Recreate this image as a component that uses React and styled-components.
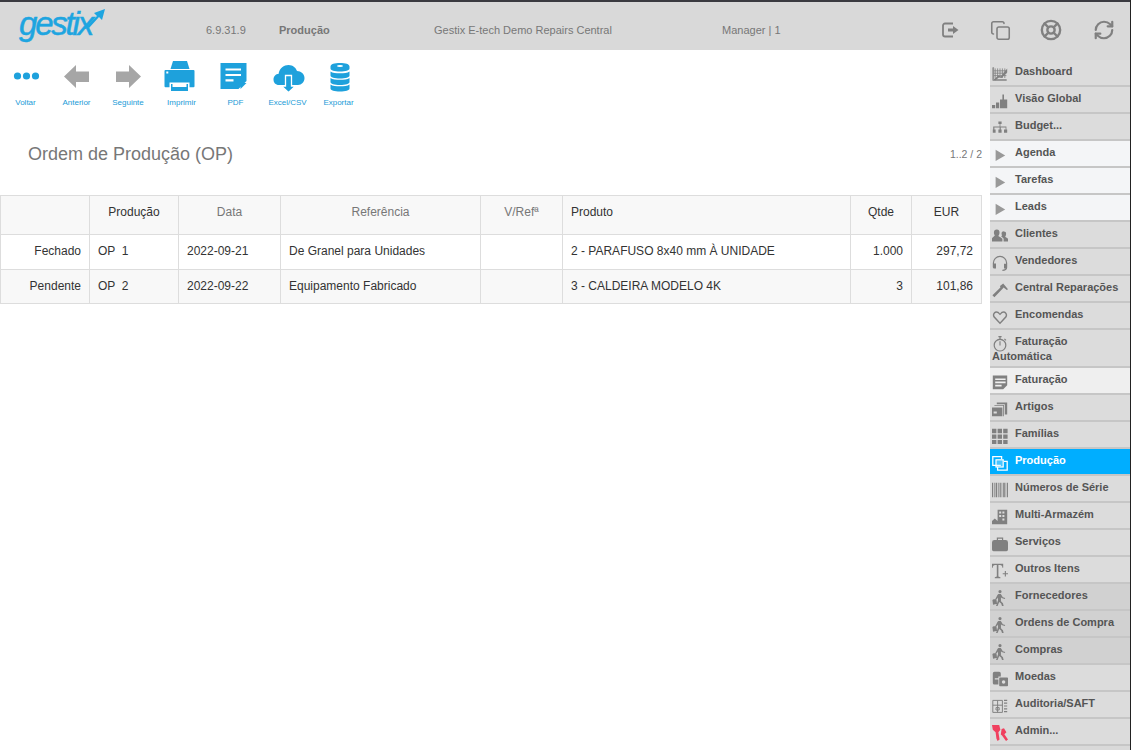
import React from 'react';
import styled, { createGlobalStyle } from 'styled-components';
import { Copy, LifeBuoy, RefreshCw } from 'lucide-react';

const Global = createGlobalStyle`
  html, body { margin: 0; padding: 0; background: #fff; }
  body { font-family: "Liberation Sans", Arial, sans-serif; }
`;

const Page = styled.div`
  width: 1131px;
  height: 750px;
  box-sizing: border-box;
  border-right: 1px solid #222;
  overflow: hidden;
  display: flex;
  flex-direction: column;
`;
const Header = styled.header`
  height: 48px;
  flex: none;
  border-top: 2px solid #3a3a40;
  background: #d9d9d9;
  display: flex;
  align-items: center;
  color: #777;
  font-size: 11px;
`;
const LogoBox = styled.div`
  width: 206px;
  flex: none;
  padding-left: 19px;
  box-sizing: border-box;
  position: relative;
  align-self: stretch;
`;
const LogoText = styled.span`
  display: block;
  font: italic 400 33px/38px "Liberation Sans", sans-serif;
  letter-spacing: -2.2px;
  color: #1ea5e0;
  -webkit-text-stroke: 0.5px #1ea5e0;
  margin-top: 3px;
`;
const LogoArrow = styled.svg`
  position: absolute;
  left: 75px;
  top: 5px;
`;
const Version = styled.span` width: 73px; flex: none; padding-top: 8px; `;
const Module = styled.span` width: 155px; flex: none; font-weight: 700; padding-top: 8px; `;
const Company = styled.span` width: 288px; flex: none; padding-top: 8px; `;
const User = styled.span` width: 219px; flex: none; padding-top: 8px; `;
const HeaderIcons = styled.div`
  display: flex;
  align-items: center;
  gap: 29px;
  padding-top: 8px;
  color: #808080;
`;
const RefreshIcon = styled(RefreshCw)`
  margin-left: 2px;
`;
const Body = styled.div`
  flex: 1;
  display: flex;
  min-height: 0;
`;
const Main = styled.main`
  width: 990px;
  flex: none;
`;
const Toolbar = styled.nav`
  display: flex;
  padding-top: 10px;
`;
const Tool = styled.div`
  width: ${p => p.$w}px;
  flex: none;
  display: flex;
  flex-direction: column;
  align-items: center;
  font-size: 8px;
  line-height: 10px;
  color: #1a9bd7;
`;
const ToolIcon = styled.svg`
  height: 34px;
  width: 36px;
  margin-bottom: 4px;
`;
const TitleRow = styled.div`
  display: flex;
  justify-content: space-between;
  align-items: center;
  width: 982px;
  margin-top: 33px;
  height: 26px;
`;
const Title = styled.h1`
  margin: 0 0 0 28px;
  font-size: 18px;
  font-weight: 400;
  color: #777;
`;
const Pager = styled.span`
  font-size: 10.5px;
  color: #777;
`;
const Table = styled.table`
  width: 982px;
  margin-top: 28px;
  border-collapse: collapse;
  table-layout: fixed;
  font-size: 12px;
  color: #333;
  box-sizing: border-box;
`;
const Head = styled.th`
  height: 39px;
  padding: 0 8px 6px;
  box-sizing: border-box;
  border: 1px solid #ddd;
  background: #f8f8f8;
  font-weight: 400;
  text-align: ${p => p.$align || 'center'};
  color: ${p => (p.$dim ? '#777' : '#333')};
`;
const Row = styled.tr`
  background: ${p => (p.$alt ? '#f8f8f8' : '#fff')};
`;
const Cell = styled.td`
  height: ${p => p.$h}px;
  padding: 0 8px 2px;
  box-sizing: border-box;
  border: 1px solid #ddd;
  text-align: ${p => p.$align || 'left'};
  white-space: pre;
`;
const Sidebar = styled.aside`
  width: 140px;
  flex: none;
  padding-top: 10px;
  background: #d9d9d9;
  box-sizing: border-box;
  overflow: hidden;
`;
const variantBg = { light: '#f4f5f7', soft: '#efefef', active: '#00aeff', dark: '#d1d1d1' };
const Item = styled.div`
  padding: 4px 8px 2px 2px;
  border-bottom: 2px solid #c6c6c6;
  min-height: 19px;
  font-size: 11px;
  font-weight: 700;
  line-height: 15px;
  color: ${p => (p.$variant === 'active' ? '#fff' : '#555')};
  background: ${p => variantBg[p.$variant] || '#dcdcdc'};
`;
const ItemIcon = styled.svg`
  display: inline-block;
  width: 16px;
  height: 16px;
  margin: -1px 7px -5px 0;
  vertical-align: middle;
  fill: ${p => p.$color || '#808080'};
  stroke: none;
`;

const Dashboard = () => (<><path d="M1 2h1v15h16v1H1zM4 3v12M7 3v12M10 3v12M13 3v12M16 3v12M2 6h16M2 9h16M2 12h16" stroke="#808080" strokeWidth="1" fill="none"/><path d="M2 17l6-5 3 1 8-10v5l-7 7-3-1-5 4z"/></>);
const Bars = () => (<path d="M0 19v-4h4v4zM5 19v-7h4v7zM10 19V8h3V2h2v6h4v11z"/>);
const Org = () => (<path d="M8 2h4v3h-1.500v3H18v4h1v4h-4v-4h2V9.500h-6V12h1v4H8v-4h1.500V9.500H3V12h1.500v4H1v-4h.5V8h8V5H8z"/>);
const Play = () => (<path fill="#999" d="M4.500 3.500l12 7-12 7z"/>);
const People = () => (<path d="M6 2c2.800 0 3.800 2 3.300 4.800 0 1-.7 2-1.300 2.900 0 1 4 2.200 5 3.800V17H-1v-3c1-2 4.500-3.500 4.500-4.800C3 8.500 2.500 7.500 2.500 6.800 2 4 3.200 2 6 2zm9 2.500c2.200 0 3 1.600 2.500 3.800 0 .8-.5 1.600-1 2.400 0 .8 3 1.700 4 3.300V17h-6v-3.500c-.7-1-2-2.200-3-2.800.5-.5 1-1 1-1.500-.3-.6-.5-1-.5-1.700-.3-2.200.7-3.500 3-3.500z"/>);
const Headset = () => (<path d="M10 1a9 9 0 0 1 9 9v5.500c0 2.500-2.300 4.500-6 4.500v-1.500c2.300 0 3.500-.6 4-1.500h-2v-6h2.500V10a7.500 7.500 0 0 0-15 0v.500H5V17H3c-1.200 0-2-1-2-2v-5a9 9 0 0 1 9-9z"/>);
const Hammer = () => (<path d="M10 5l4-3 6 7-1.500 1-4-3-1 1L3 19l-2.500-2.500L10.500 7z"/>);
const Heart = () => (<path fillRule="evenodd" d="M10 19L2 10.500C-1 6.500 3.500.5 8 3.500L10 5.500l2-2c4.500-3 9 3 6 7zM10 16.500l6.500-7c2-2.800-1-6.500-4-4.200L10 7.700 7.500 5.300c-3-2.300-6 1.400-4 4.200z"/>);
const Timer = () => (<path fillRule="evenodd" d="M8 0h4v1.500h-1.200v2a8 8 0 1 1-1.600 0v-2H8zM10 5a6.500 6.500 0 1 0 0 13 6.500 6.500 0 0 0 0-13zm-.7 1.500h1.400V12H9.300zM16 3l2 2-1 1-2-2z"/>);
const Invoice = () => (<path fillRule="evenodd" d="M1 2h18v12l-5 5H1zm3 3.500v2h13v-2zm0 4v2h13v-2zm0 4v2h8v-2z"/>);
const Stack = () => (<path d="M0 8h13v11H0zM3 5h12v14h-1V6H3zM6 2h13v15h-3V4H6zM2 13v2.500h4V13z"/>);
const Grid = () => (<path d="M0 1h5.500v5.500H0zM7 1h5.500v5.500H7zM14 1h5.500v5.500H14zM0 8h5.500v5.500H0zM7 8h5.500v5.500H7zM14 8h5.500v5.500H14zM0 15h5.500v5.500H0zM7 15h5.500v5.500H7zM14 15h5.500v5.500H14z"/>);
const Layers = () => (<g><g fill="none" stroke="#fff" strokeWidth="1.600"><path d="M11 13H1V2h11v3"/><path d="M7 15v4h12V8h-4"/></g><rect x="5" y="6" width="9" height="9" fill="#cfeeff" stroke="#fff" strokeWidth="1.500" fillOpacity=".35"/></g>);
const Barcode = () => (<path d="M0 1h1.500v18H0zM2.500 1h.8v18h-.8zM4.500 1h2v18h-2zM7.500 1h.8v18h-.8zM9.500 1h1.500v18H9.500zM12 1h.8v18H12zM14 1h2v18h-2zM17 1h.8v18H17zM18.800 1h1.200v18h-1.200z"/>);
const Warehouse = () => (<path fillRule="evenodd" d="M7 1h12v18H7zm2 2v2.500h2.500V3zm4 0v2.500h2.500V3zm0 4.500V10h2.500V7.500zm-4 0V10h2.500V7.500zm4 4.500v2.500h2.500V12zM0 15l3.500-3L7 15v4H0z"/>);
const Case = () => (<path fillRule="evenodd" d="M6 2h8v3h3a3 3 0 0 1 3 3v9a2 2 0 0 1-2 2H2a2 2 0 0 1-2-2V8a3 3 0 0 1 3-3h3zm1.500 1.500V5h5V3.500z"/>);
const TextPlus = () => (<path d="M0 1h14v5h-1c0-2.500-1-3.500-3-3.500H8V17l2.500.7V19H3.500v-1.300L6 17V2.500H4C2 2.500 1 3.500 1 6H0zM16 10h1.400v2.800H20v1.400h-2.600V17H16v-2.800h-2.600v-1.400H16z"/>);
const Walker = () => (<path d="M10 0a2 2 0 1 1 0 4 2 2 0 0 1 0-4zM8 5h3l2.500 4 3 1-.5 1.300-4-1.300-.8-1v5l2.500 2.500 1 4h-2l-1.300-3.500-2.400-2L7 20H5l2.500-7V9.500L6 11.500H2L.5 12.500l.8 6 5-1.300-.8-6-1.500.5L7 6z"/>);
const Coins = () => (<path fillRule="evenodd" d="M3 1h6a2 2 0 0 1 2 2v4H8v2H3.500v1.500H8V17H3a2 2 0 0 1-2-2V3a2 2 0 0 1 2-2zm7 7h9a1 1 0 0 1 1 1v9a1 1 0 0 1-1 1h-9a1 1 0 0 1-1-1V9a1 1 0 0 1 1-1zm4.500 3.500a2.200 2.200 0 1 0 0 4.400 2.200 2.200 0 0 0 0-4.400z"/>);
const Audit = () => (<g fill="none" stroke="#808080" strokeWidth="1.200"><path d="M1 3h12v15H1zM1 9h12M7 3v15M5 12h4v3H5z"/><path d="M15 3h4M15 6.500h4M15 10h4M15 13.500h4M15 17h4" strokeWidth="1.500"/></g>);
const Keys = () => (<path d="M0 0h9l1.500 6-2.500 3 1.500 9-2.500 2-1.500-3-1-8L1 6zM12 5l3-1 3 5-2.500 2.500L20 18l-2.500 2-5-7-1.500-1z"/>);

const menu = [
  ['Dashboard', Dashboard], ['Visão Global', Bars], ['Budget...', Org],
  ['Agenda', Play, 'light'], ['Tarefas', Play, 'light'], ['Leads', Play, 'light'],
  ['Clientes', People], ['Vendedores', Headset], ['Central Reparações', Hammer], ['Encomendas', Heart],
  ['Faturação Automática', Timer], ['Faturação', Invoice, 'soft'], ['Artigos', Stack], ['Famílias', Grid],
  ['Produção', Layers, 'active'], ['Números de Série', Barcode], ['Multi-Armazém', Warehouse], ['Serviços', Case],
  ['Outros Itens', TextPlus], ['Fornecedores', Walker, 'dark'], ['Ordens de Compra', Walker, 'dark'], ['Compras', Walker, 'dark'],
  ['Moedas', Coins], ['Auditoria/SAFT', Audit], ['Admin...', Keys, undefined, '#f0405f'],
];

const BLUE = '#1ea1dc';
const tools = [
  ['Voltar', 51, <g fill={BLUE}><circle cx="9.500" cy="16" r="3.600"/><circle cx="18.500" cy="16" r="3.600"/><circle cx="27.500" cy="16" r="3.600"/></g>],
  ['Anterior', 51, <path fill="#a6a6a6" d="M5 16.500L17 5v6.500h13v10.500H17v6z"/>],
  ['Seguinte', 52, <path fill="#a6a6a6" d="M31 16.500L19 5v6.500H6v10.500h13v6z"/>],
  ['Imprimir', 55, <g fill={BLUE}><path d="M9 1h14l2.500 8h-19z"/><path fillRule="evenodd" d="M1.500 10h28a1 1 0 0 1 1 1v15.300a1 1 0 0 1-1 1h-4V22.500H5.500v4.800h-4a1 1 0 0 1-1-1V11a1 1 0 0 1 1-1zm.8 1.600v2h2v-2z"/><path d="M7 24h17v7H7zm1.500 0v3h14v-3z" fillRule="evenodd"/></g>],
  ['PDF', 53, <g fill={BLUE}><path fillRule="evenodd" d="M2.500 3h26v18l-8 8h-18zm5 5.500v2h15.500v-2zm0 5.500v2h15.500v-2zm0 5.300v2.200H15.500v-2.200z"/><path d="M28.500 23l-6 6v-6z"/></g>],
  ['Excel/CSV', 51, <g fill={BLUE}><path d="M10 25H9C5.500 25 3.500 22.500 3.500 19.500 3.500 16 6 14 8.500 14 9.500 8 14 5 18.500 5 23 5 26 8 27 11 31 11 34.500 14 34.500 18 34.500 22 31.500 25 28 25z"/><path d="M15.500 15.500h6V26h4l-7 6.500-7-6.500h4z" stroke="#fff" strokeWidth="1.300"/></g>],
  ['Exportar', 51, <g fill={BLUE}><path fillRule="evenodd" d="M9.500 6.500c0-2.500 4-3.500 9.500-3.500s9.500 1 9.500 3.500v2c0 2-4 3-9.500 3s-9.500-1-9.500-3zm6.500-.5a3 .9 0 0 0 6 0 3 .9 0 0 0-6 0z"/><path d="M9.500 11.500c2 1.500 5.500 1.800 9.500 1.800s7.500-.3 9.500-1.800v4c0 2-4 3-9.500 3s-9.500-1-9.500-3z"/><path d="M9.500 18c2 1.500 5.500 1.800 9.500 1.800s7.500-.3 9.500-1.800v4c0 2-4 3-9.500 3s-9.500-1-9.500-3z"/><path d="M9.500 24.500c2 1.500 5.500 1.800 9.500 1.800s7.500-.3 9.500-1.800v4c0 2-4 3-9.500 3s-9.500-1-9.500-3z"/></g>],
];

const columns = [
  ['', 89, 'center'], ['Produção', 89, 'center'], ['Data', 102, 'center', true], ['Referência', 200, 'center', true],
  ['V/Refª', 82, 'center', true], ['Produto', 288, 'left'], ['Qtde', 61, 'center'], ['EUR', 70, 'center'],
];
const rows = [
  ['Fechado', 'OP  1', '2022-09-21', 'De Granel para Unidades', '', '2 - PARAFUSO 8x40 mm À UNIDADE', '1.000', '297,72'],
  ['Pendente', 'OP  2', '2022-09-22', 'Equipamento Fabricado', '', '3 - CALDEIRA MODELO 4K', '3', '101,86'],
];
const right = [true, false, false, false, false, false, true, true];

export default function App() {
  return (
    <Page>
      <Global />
      <Header>
        <LogoBox>
          <LogoText>gestix</LogoText>
          <LogoArrow width="32" height="26" viewBox="0 0 32 26">
            <path d="M12 19L22 9l-3-3 11-4-3 11-3-3L14 21z" fill="#1ea5e0" />
          </LogoArrow>
        </LogoBox>
        <Version>6.9.31.9</Version>
        <Module>Produção</Module>
        <Company>Gestix E-tech Demo Repairs Central</Company>
        <User>Manager | 1</User>
        <HeaderIcons>
          <svg width="20" height="20" viewBox="0 0 20 20" fill="none" stroke="#808080" strokeWidth="1.800">
            <path d="M12 3.500H4a2 2 0 0 0-2 2v9a2 2 0 0 0 2 2h8" />
            <path d="M7 8.500h5V6l5.500 4-5.500 4v-2.500H7z" fill="#808080" stroke="none" />
          </svg>
          <Copy size={21} strokeWidth={1.8} />
          <LifeBuoy size={22} strokeWidth={2.6} />
          <RefreshIcon size={22} strokeWidth={2.4} />
        </HeaderIcons>
      </Header>
      <Body>
        <Main>
          <Toolbar>
            {tools.map(([label, w, icon]) => (
              <Tool key={label} $w={w}>
                <ToolIcon viewBox="0 0 36 34">{icon}</ToolIcon>
                {label}
              </Tool>
            ))}
          </Toolbar>
          <TitleRow>
            <Title>Ordem de Produção (OP)</Title>
            <Pager>1..2 / 2</Pager>
          </TitleRow>
          <Table>
            <colgroup>
              {columns.map(([name, w]) => <col key={name} width={w} />)}
            </colgroup>
            <thead>
              <tr>
                {columns.map(([name, , align, dim]) => (
                  <Head key={name} $align={align} $dim={dim}>{name}</Head>
                ))}
              </tr>
            </thead>
            <tbody>
              {rows.map((r, ri) => (
                <Row key={ri} $alt={ri === 1}>
                  {r.map((c, i) => (
                    <Cell key={i} $h={ri === 0 ? 35 : 34} $align={right[i] ? 'right' : 'left'}>{c}</Cell>
                  ))}
                </Row>
              ))}
            </tbody>
          </Table>
        </Main>
        <Sidebar>
          {menu.map(([label, Icon, variant, color]) => (
            <Item key={label} $variant={variant}>
              <ItemIcon viewBox="0 0 20 20" $color={color}><Icon /></ItemIcon>
              {label}
            </Item>
          ))}
        </Sidebar>
      </Body>
    </Page>
  );
}
